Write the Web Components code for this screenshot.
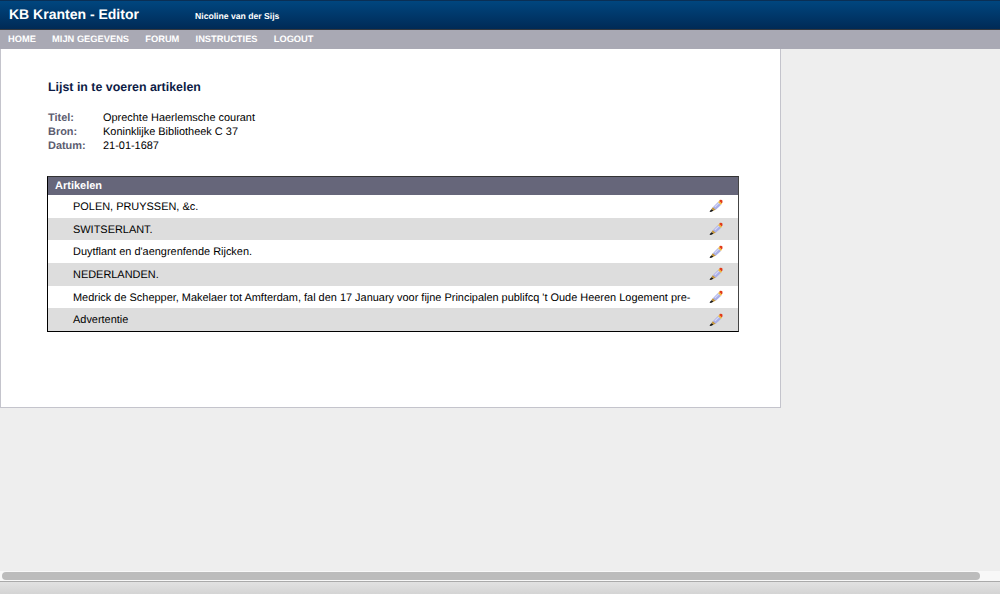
<!DOCTYPE html>
<html>
<head>
<meta charset="utf-8">
<title>KB Kranten - Editor</title>
<style>
html, body { margin: 0; height: 100%; overflow: hidden; }
body { background: #eee; font-family: "Liberation Sans", Arial, sans-serif; color: #000; text-rendering: geometricPrecision; }
kb-app { height: 594px; }
</style>
</head>
<body>
<kb-app>
	<kb-header slot="header" title-text="KB Kranten - Editor" user="Nicoline van der Sijs"></kb-header>
	<kb-nav slot="nav">
		<a>HOME</a><a>MIJN GEGEVENS</a><a>FORUM</a><a>INSTRUCTIES</a><a>LOGOUT</a>
	</kb-nav>
	<kb-panel slot="main">
		<h1>Lijst in te voeren artikelen</h1>
		<kb-meta label="Titel:">Oprechte Haerlemsche courant</kb-meta>
		<kb-meta label="Bron:">Koninklijke Bibliotheek C 37</kb-meta>
		<kb-meta label="Datum:">21-01-1687</kb-meta>
		<kb-table heading="Artikelen">
			<kb-row>POLEN, PRUYSSEN, &amp;c.</kb-row>
			<kb-row alt>SWITSERLANT.</kb-row>
			<kb-row>Duytflant en d'aengrenfende Rijcken.</kb-row>
			<kb-row alt>NEDERLANDEN.</kb-row>
			<kb-row>Medrick de Schepper, Makelaer tot Amfterdam, fal den 17 January voor fijne Principalen publifcq 't Oude Heeren Logement pre-</kb-row>
			<kb-row alt>Advertentie</kb-row>
		</kb-table>
	</kb-panel>
	<kb-scrollbar slot="scroll"></kb-scrollbar>
</kb-app>

<script>
class KbApp extends HTMLElement {
	constructor() {
		super();
		this.attachShadow({mode:'open'});
		this.shadowRoot.innerHTML = `
		<style>
			:host { display: flex; flex-direction: column; }
			.main { flex: 1; min-height: 0; }
		</style>
		<slot name="header"></slot>
		<slot name="nav"></slot>
		<div class="main"><slot name="main"></slot></div>
		<slot name="scroll"></slot>
		`;
	}
}

class KbHeader extends HTMLElement {
	constructor() {
		super();
		this.attachShadow({mode:'open'});
		this.shadowRoot.innerHTML = `
		<style>
			:host {
				display: flex;
				height: 30px;
				box-sizing: border-box;
				background: linear-gradient(#00467f, #002a56);
				border-top: 1px solid #0a2f55;
				border-bottom: 1px solid #33383f;
				color: #fff;
				font-weight: bold;
			}
			.title { width: 195px; box-sizing: border-box; padding: 5px 0 0 9px; font-size: 14px; line-height: 17px; }
			.user { font-size: 8.65px; line-height: 11px; padding-top: 10px; }
		</style>
		<div class="title"></div>
		<div class="user"></div>
		`;
	}
	connectedCallback() {
		this.shadowRoot.querySelector('.title').textContent = this.getAttribute('title-text');
		this.shadowRoot.querySelector('.user').textContent = this.getAttribute('user');
	}
}

class KbNav extends HTMLElement {
	constructor() {
		super();
		this.attachShadow({mode:'open'});
		this.shadowRoot.innerHTML = `
		<style>
			:host {
				display: flex;
				height: 19px;
				box-sizing: border-box;
				padding: 0 0 0 8px;
				gap: 16.2px;
				background: #a9a9b4;
				color: #fff;
				font-size: 9.3px;
				font-weight: bold;
				line-height: 19px;
			}
		</style>
		<slot></slot>
		`;
	}
}

class KbPanel extends HTMLElement {
	constructor() {
		super();
		this.attachShadow({mode:'open'});
		this.shadowRoot.innerHTML = `
		<style>
			:host {
				display: block;
				width: 781px;
				height: 359px;
				box-sizing: border-box;
				padding: 31px 41px 0 47px;
				background: #fff;
				border: 1px solid #c4c4cc;
				border-top: 0;
				font-size: 11px;
			}
			::slotted(h1) {
				margin: 0 0 16px;
				font-size: 12.4px;
				line-height: 15px;
				font-weight: bold;
				color: #0d1b45;
			}
		</style>
		<slot></slot>
		`;
	}
}

class KbMeta extends HTMLElement {
	constructor() {
		super();
		this.attachShadow({mode:'open'});
		this.shadowRoot.innerHTML = `
		<style>
			:host { display: flex; line-height: 14px; font-size: 10.95px; }
			b { width: 55px; color: #5c5c70; }
		</style>
		<b></b><span><slot></slot></span>
		`;
	}
	connectedCallback() {
		this.shadowRoot.querySelector('b').textContent = this.getAttribute('label');
	}
}

class KbTable extends HTMLElement {
	constructor() {
		super();
		this.attachShadow({mode:'open'});
		this.shadowRoot.innerHTML = `
		<style>
			:host {
				display: block;
				margin: 23px 0 0 -1px;
				border: 1px solid #000;
				border-top-color: #333;
				border-right-color: #444;
			}
			.head {
				height: 18px;
				padding-left: 7px;
				background: #66667a;
				color: #fff;
				font-size: 11px;
				font-weight: bold;
				line-height: 19px;
			}
		</style>
		<div class="head"></div>
		<slot></slot>
		`;
	}
	connectedCallback() {
		this.shadowRoot.querySelector('.head').textContent = this.getAttribute('heading');
	}
}

class KbRow extends HTMLElement {
	constructor() {
		super();
		this.attachShadow({mode:'open'});
		this.shadowRoot.innerHTML = `
		<style>
			:host {
				display: flex;
				align-items: center;
				justify-content: space-between;
				height: 22.67px;
				padding: 0 15px 0 25px;
				background: #fff;
				font-size: 10.95px;
			}
			:host([alt]) { background: #ddd; }
			span { padding-top: 1.4px; }
			svg { display: block; width: 14px; height: 14px; }
		</style>
		<span><slot></slot></span>
		<svg viewBox="0 0 14 14">
			<path d="M.6 13 L1.2 11.6 L3 10 L4.6 11.6 L2.6 12.8 Z" fill="#1c1c1c"/>
			<path d="M2.6 9.8 L4 8 L7 10.6 L4.4 11.8 Z" fill="#c4953a"/>
			<path d="M3.8 8.2 L9 3 L12 6 L6.8 10.8 Z" fill="#a9aee6"/>
			<path d="M5.4 7.6 L9.4 3.8 L10.2 4.6 L6.2 8.4 Z" fill="#d8daf6"/>
			<path d="M9 3 L10.2 2 L12.8 4.6 L12 6 Z" fill="#f0bc30"/>
			<path d="M10.2 2 L11 .8 L13.2 1 L13.6 3 L12.8 4.6 Z" fill="#e23a18"/>
		</svg>
		`;
	}
}

class KbScrollbar extends HTMLElement {
	constructor() {
		super();
		this.attachShadow({mode:'open'});
		this.shadowRoot.innerHTML = `
		<style>
			:host { display: block; }
			.track { height: 10px; background: #f8f8f8; padding: 1px 20px 1px 2px; box-sizing: border-box; }
			.thumb { height: 8px; border-radius: 4px; background: #bcbcbc; }
			.status { height: 13px; box-sizing: border-box; border-top: 1px solid #aaa; background: linear-gradient(#e2e2e2, #d4d4d4); }
		</style>
		<div class="track"><div class="thumb"></div></div>
		<div class="status"></div>
		`;
	}
}

customElements.define('kb-app', KbApp);
customElements.define('kb-header', KbHeader);
customElements.define('kb-nav', KbNav);
customElements.define('kb-panel', KbPanel);
customElements.define('kb-meta', KbMeta);
customElements.define('kb-table', KbTable);
customElements.define('kb-row', KbRow);
customElements.define('kb-scrollbar', KbScrollbar);
</script>
</body>
</html>
